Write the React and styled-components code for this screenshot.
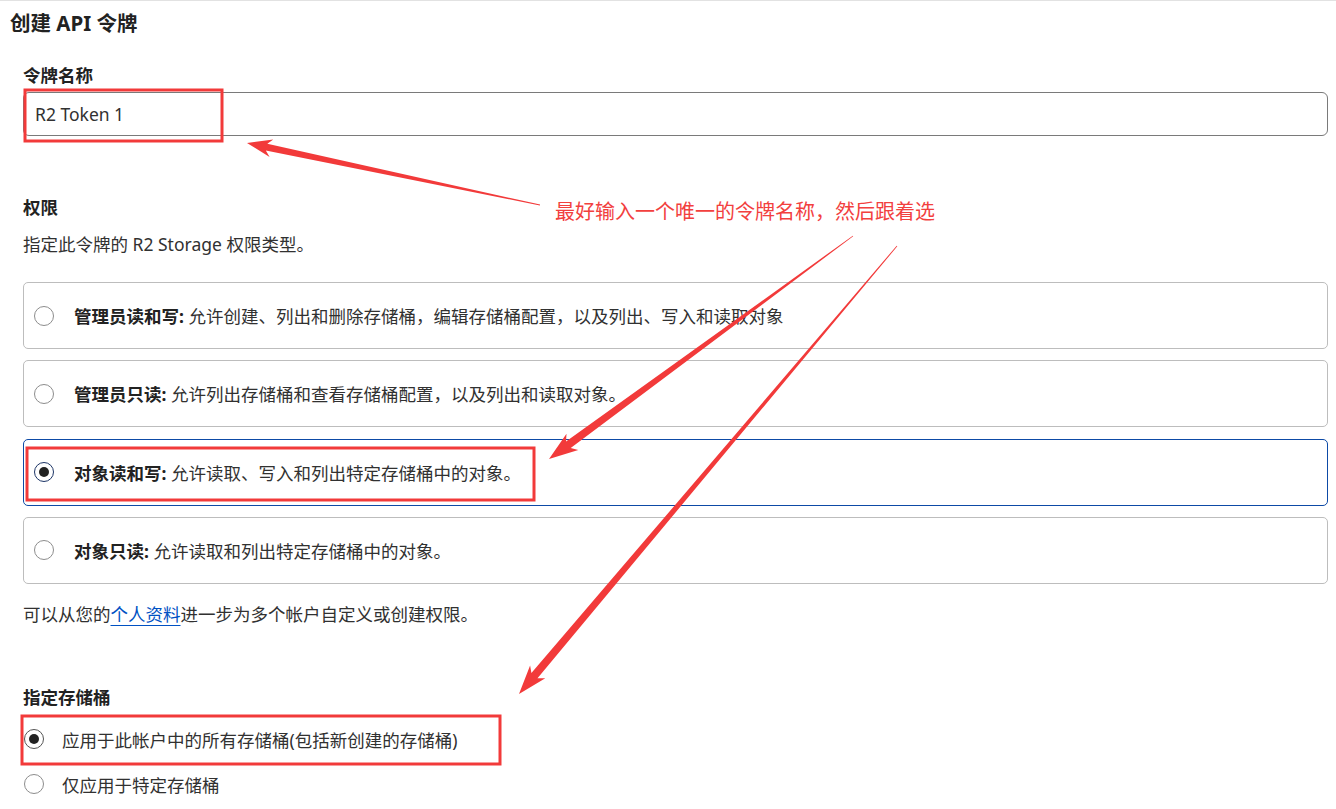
import React from "react";
import styled, { createGlobalStyle } from "styled-components";

const GlobalStyle = createGlobalStyle`
  html, body {
    margin: 0;
    padding: 0;
    background: #ffffff;
  }
  body {
    font-family: "Noto Sans", "Noto Sans CJK SC", sans-serif;
    color: #313131;
  }
`;

const Page = styled.div`
  position: relative;
  width: 1336px;
  height: 809px;
  box-sizing: border-box;
  border-top: 1px solid #e2e2e2;
  padding: 0 8px 0 10px;
  overflow: hidden;
`;

const Title = styled.h1`
  margin: 0;
  font-size: 20.5px;
  line-height: 44px;
  font-weight: 700;
  color: #222;
`;

const Form = styled.div`
  padding-left: 13px;
  display: flex;
  flex-direction: column;
`;

const Label = styled.div`
  font-size: 17.5px;
  line-height: 24px;
  font-weight: 700;
  color: #222;
  margin-top: ${(p) => p.$top}px;
`;

const Input = styled.div`
  margin-top: 5px;
  height: 44px;
  box-sizing: border-box;
  border: 1px solid #7a7a7a;
  border-radius: 6px;
  display: flex;
  align-items: center;
  padding-left: 11px;
  font-size: 17.5px;
  color: #313131;
`;

const Text = styled.div`
  font-size: 17.5px;
  line-height: 24px;
  margin-top: ${(p) => p.$top}px;
`;

const Link = styled.a`
  color: #0051c3;
  text-decoration: underline;
  text-underline-offset: 4px;
  text-decoration-thickness: 1px;
`;

const CardList = styled.div`
  margin-top: 26px;
  display: flex;
  flex-direction: column;
  gap: 11.3px;
`;

const Card = styled.div`
  height: 67px;
  box-sizing: border-box;
  border: 1px solid ${(p) => (p.$selected ? "#0d4aa6" : "#bdbdbd")};
  border-radius: 5px;
  display: flex;
  align-items: center;
  padding-left: 10px;
  gap: 20px;
  font-size: 17.5px;
`;

const Radio = styled.span`
  width: 20px;
  height: 20px;
  box-sizing: border-box;
  flex: none;
  border-radius: 50%;
  border: ${(p) => (p.$checked ? `1.5px solid ${p.$ring}` : "1px solid #8d8d8d")};
  display: flex;
  align-items: center;
  justify-content: center;
  background: #fff;

  &::after {
    content: "";
    display: ${(p) => (p.$checked ? "block" : "none")};
    width: 10px;
    height: 10px;
    border-radius: 50%;
    background: #222;
  }
`;

const Strong = styled.b`
  font-weight: 700;
  color: #222;
`;

const BucketList = styled.div`
  margin-top: 8px;
  display: flex;
  flex-direction: column;
`;

const BucketRow = styled.div`
  height: 45px;
  display: flex;
  align-items: center;
  padding-left: 1px;
  gap: 18px;
  font-size: 17.5px;
`;

const Overlay = styled.svg`
  position: absolute;
  top: 0;
  left: 0;
  pointer-events: none;
`;

const Note = styled.div`
  position: absolute;
  left: 555px;
  top: 197px;
  font-size: 20px;
  line-height: 26px;
  color: #f2403e;
  font-family: "Noto Sans CJK SC", sans-serif;
  white-space: nowrap;
`;

const options = [
  { name: "管理员读和写:", desc: "允许创建、列出和删除存储桶，编辑存储桶配置，以及列出、写入和读取对象" },
  { name: "管理员只读:", desc: "允许列出存储桶和查看存储桶配置，以及列出和读取对象。" },
  { name: "对象读和写:", desc: "允许读取、写入和列出特定存储桶中的对象。", selected: true },
  { name: "对象只读:", desc: "允许读取和列出特定存储桶中的对象。" },
];

function arrow(tail, tip, headLen = 22, headW = 19, shaftW = 6) {
  const dx = tip[0] - tail[0];
  const dy = tip[1] - tail[1];
  const len = Math.hypot(dx, dy);
  const ux = dx / len;
  const uy = dy / len;
  const nx = -uy;
  const ny = ux;
  const bx = tip[0] - ux * headLen;
  const by = tip[1] - uy * headLen;
  const wx = bx - ux * 5;
  const wy = by - uy * 5;
  const pts = [
    [tail[0] + nx * 0.4, tail[1] + ny * 0.4],
    [bx + nx * shaftW / 2, by + ny * shaftW / 2],
    [wx + nx * headW / 2, wy + ny * headW / 2],
    tip,
    [wx - nx * headW / 2, wy - ny * headW / 2],
    [bx - nx * shaftW / 2, by - ny * shaftW / 2],
    [tail[0] - nx * 0.4, tail[1] - ny * 0.4],
  ];
  return pts.map((p) => p.map((v) => v.toFixed(1)).join(",")).join(" ");
}

const Annotations = () => (
  <>
    <Overlay width="1336" height="809" viewBox="0 0 1336 809">
      <g fill="none" stroke="#f23a3a" strokeWidth="3">
        <rect x="25" y="89" width="197" height="51" />
        <rect x="27" y="447" width="507" height="52" />
        <rect x="22" y="715" width="478" height="48" />
      </g>
      <g fill="#f23a3a">
        <polygon points={arrow([540, 204], [247, 142], 20, 18, 7)} />
        <polygon points={arrow([853, 235], [549, 458], 24, 20, 8)} />
        <polygon points={arrow([897, 245], [519, 693], 24, 20, 8)} />
      </g>
    </Overlay>
    <Note>最好输入一个唯一的令牌名称，然后跟着选</Note>
  </>
);

export default function App() {
  return (
    <>
      <GlobalStyle />
      <Page>
        <Title>创建 API 令牌</Title>
        <Form>
          <Label $top={18}>令牌名称</Label>
          <Input>R2 Token 1</Input>

          <Label $top={59}>权限</Label>
          <Text $top={13}>指定此令牌的 R2 Storage 权限类型。</Text>

          <CardList>
            {options.map((o) => (
              <Card key={o.name} $selected={o.selected}>
                <Radio $checked={o.selected} $ring="#1d3566" />
                <span>
                  <Strong>{o.name}</Strong> {o.desc}
                </span>
              </Card>
            ))}
          </CardList>

          <Text $top={18}>
            可以从您的<Link>个人资料</Link>进一步为多个帐户自定义或创建权限。
          </Text>

          <Label $top={59}>指定存储桶</Label>
          <BucketList>
            <BucketRow>
              <Radio $checked $ring="#555" />
              <span>应用于此帐户中的所有存储桶(包括新创建的存储桶)</span>
            </BucketRow>
            <BucketRow>
              <Radio />
              <span>仅应用于特定存储桶</span>
            </BucketRow>
          </BucketList>
        </Form>
        <Annotations />
      </Page>
    </>
  );
}
